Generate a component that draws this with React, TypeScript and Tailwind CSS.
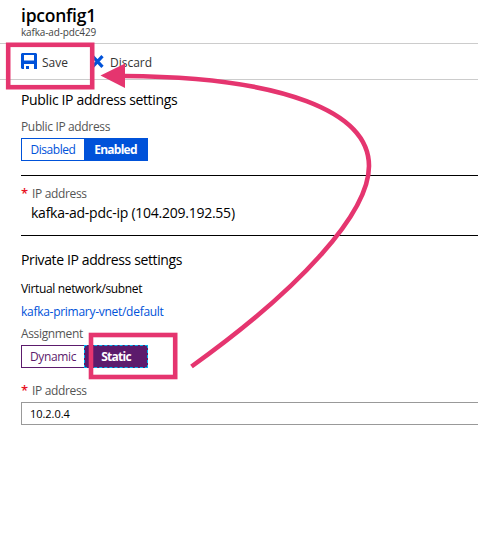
import type { ReactNode } from "react";

function Line({ className, children }: { className: string; children: ReactNode }) {
  return <div className={`flex items-center whitespace-nowrap leading-none ${className}`}>{children}</div>;
}

function RequiredMark() {
  return <span className="w-[11px] pb-0.5 text-[13px] font-semibold text-[#e81123]">*</span>;
}

function SaveIcon() {
  return (
    <svg className="-mt-px block h-4 w-4 shrink-0" viewBox="0 0 16 16">
      <path fill="#0052d9" fillRule="evenodd" d="M1 0H15L16 1V16H13V11H3V16H1L0 15V1ZM3 2V7.5H13V2ZM5 13H8V16H5Z" />
    </svg>
  );
}

function DiscardIcon() {
  return (
    <svg className="-mt-px block h-[13px] w-[13px] shrink-0" viewBox="0 0 13 13">
      <path d="M1.5 1.2L11.5 11.8M11.5 1.2L1.5 11.8" stroke="#0052d9" strokeWidth="3.2" />
    </svg>
  );
}

function Annotations() {
  return (
    <svg className="pointer-events-none absolute left-0 top-0" width="478" height="539" fill="none" stroke="#e5356f">
      <rect x="8.2" y="44.8" width="84" height="42.4" strokeWidth="4.6" />
      <rect x="91" y="335" width="84.2" height="42" strokeWidth="4.6" />
      <path strokeWidth="4.6" d="M191.5 366.5C300 289 369 213 369 166C369 112 284 77 124 76" />
      <path fill="#e5356f" stroke="none" d="M100.5 75.5L125 63.5V88Z" />
    </svg>
  );
}

export default function App() {
  return (
    <div className="relative flex h-[539px] w-[478px] flex-col overflow-hidden bg-white font-['Open_Sans','Noto_Sans',sans-serif] text-[12px] tracking-[-0.35px] text-black">
      <header className="h-[43px] shrink-0 pl-[21px] pt-[5px]">
        <Line className="h-[21px] text-[17.5px] font-semibold tracking-[-0.25px]">ipconfig1</Line>
        <Line className="h-3 text-[10px] tracking-[-0.15px] text-[#444]">kafka-ad-pdc429</Line>
      </header>
      <div className="flex h-[37px] shrink-0 items-center border-y border-[#ccc] pl-[21px] tracking-normal text-[#333]">
        <SaveIcon />
        <Line className="ml-[5px] h-5 w-[49px] pt-0.5">Save</Line>
        <DiscardIcon />
        <Line className="ml-1.5 h-5 pt-0.5">Discard</Line>
      </div>
      <main className="flex flex-col pl-[21px]">
        <Line className="mt-2.5 h-5 text-[14px]">Public IP address settings</Line>
        <Line className="mt-2 h-[18px] text-[#555]">Public IP address</Line>
        <div className="mt-0.5 flex h-[23px] w-[127px] border border-[#0052d9]">
          <Line className="w-[62px] justify-center tracking-[-0.45px] text-[#0052d9]">Disabled</Line>
          <Line className="grow justify-center bg-[#0052d9] font-bold tracking-[-0.75px] text-white">Enabled</Line>
        </div>
        <section className="mt-3.5 h-[61px] border-y border-black pt-[9px]">
          <Line className="h-[18px] text-[#555]">
            <RequiredMark />IP address
          </Line>
          <Line className="h-5 pl-2.5 text-[14px] tracking-[-0.25px]">kafka-ad-pdc-ip (104.209.192.55)</Line>
        </section>
        <Line className="mt-3.5 h-5 text-[14px] tracking-[-0.38px]">Private IP address settings</Line>
        <Line className="mt-2.5 h-[18px]">Virtual network/subnet</Line>
        <Line className="mt-[5px] h-[18px] tracking-[-0.28px] text-[#0052d9]">kafka-primary-vnet/default</Line>
        <Line className="mt-1 h-[18px] tracking-[-0.35px] text-[#555]">Assignment</Line>
        <div className="mt-0.5 flex h-[23px] w-[127px]">
          <Line className="w-[63px] justify-center border border-r-0 border-[#5c1b6c] text-[#5c1b6c]">Dynamic</Line>
          <Line className="grow justify-center border border-dashed border-[#00b4f0] bg-[#5c1b6c] font-bold tracking-[-0.75px] text-white">Static</Line>
        </div>
        <Line className="mt-3.5 h-[18px] text-[#555]">
          <RequiredMark />IP address
        </Line>
        <Line className="mt-0.5 h-[23px] border border-r-0 border-[#999] pl-2 text-[11px] tracking-[-0.05px]">10.2.0.4</Line>
      </main>
      <Annotations />
    </div>
  );
}
